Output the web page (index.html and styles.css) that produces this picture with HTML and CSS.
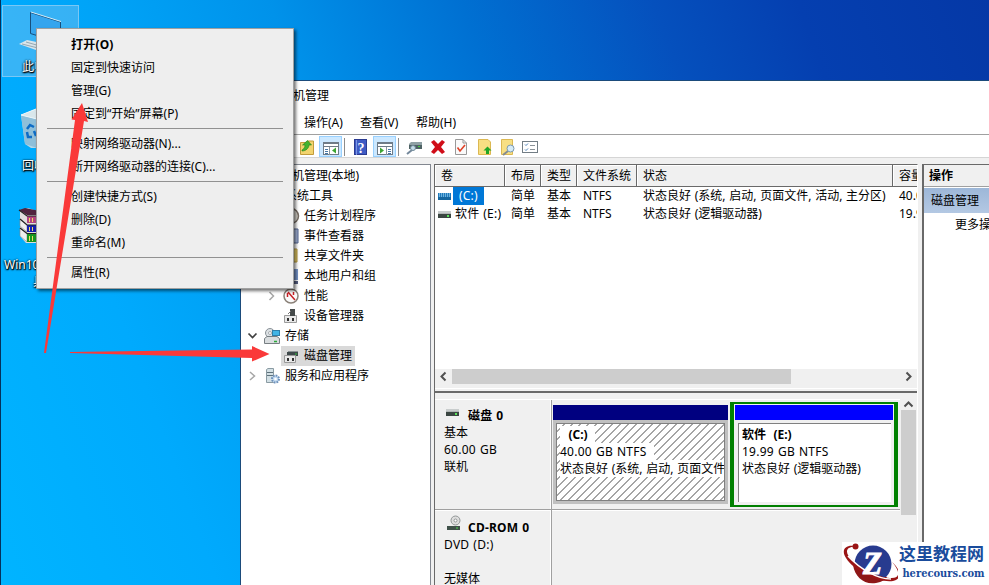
FILE: index.html
```html
<!DOCTYPE html>
<html lang="zh-CN">

<head>
    <title>计算机管理</title>
    <meta charset="UTF-8">
    <link rel="stylesheet" href="styles.css">
</head>

<body>
    <div class="desktop">
        <!-- 桌面图标 -->
        <div class="icon-selected"></div>
        <svg class="desk-icons" width="100" height="300" viewBox="0 0 100 300">
            <path d="M30.500 12.500L60.500 22V43L30.500 33.500Z" fill="#35a5ee" stroke="#174f7c"/>
            <path d="M31 12L61 21.500" stroke="#d5ecf8"/>
            <path d="M19 44L27 40L46 44V51L36 50Z" fill="#d9e5ea"/>
            <path d="M22 44L38 48M26 42L40 46" stroke="#94a8b3"/>
            <path d="M21 115L36 109L50 112L45 148H31L25 144Z" fill="#b9d7e5"/>
            <path d="M21 115L36 119L37 148L25 144Z" fill="#8fbfd9"/>
            <path d="M21 115L36 109L50 112L37 119Z" fill="#d9e7eb" stroke="#edf6fa"/>
            <path d="M27 129L30 125L34 127M27 132L28 137H32M34 131L36 136" fill="none" stroke="#0d6cc6" stroke-width="2.500"/>
            <path d="M20 211L28 208L40 212V243L26 243L20 236Z" fill="#e1dede"/>
            <path d="M19 210L25 208L40 211V215H27Z" fill="#50243f"/>
            <path d="M27 216H40V223H27Z" fill="#b34580"/>
            <path d="M20 219L27 225V232L20 226Z" fill="#eee" stroke="#888" stroke-width=".6"/>
            <path d="M27 225H40V232H27Z" fill="#151fb0"/>
            <path d="M20 228L27 234V242L20 236Z" fill="#eee" stroke="#888" stroke-width=".6"/>
            <path d="M27 234H40V242H27Z" fill="#189521"/>
            <path d="M19 210L27 216H40M20 219L27 225H40M20 228L27 233.500H40" fill="none" stroke="#222" stroke-width="1.200"/>
            <path d="M29.500 218V222M32.500 218V222M29.500 227V231M32.500 227V231M29.500 236V241M32.500 236V241" stroke="#f1dc62"/>
        </svg>
        <div class="desk-label label-pc">此电脑</div>
        <div class="desk-label label-bin">回收站</div>
        <div class="desk-label label-win">Win10激活</div>
        <div class="desk-label label-tool">具</div>

        <!-- 计算机管理窗口 -->
        <div class="window">
            <div class="titlebar">计算机管理</div>
            <div class="menubar"><span>文件(F)</span><span>操作(A)</span><span>查看(V)</span><span>帮助(H)</span></div>
            <div class="toolbar">
                <svg width="310" height="22" viewBox="240 136 310 22">
                    <path d="M300.500 142.500H306L307.500 141H313.500V154.500H300.500Z" fill="#f2d46e" stroke="#c29b3b"/>
                    <path d="M302 150C304 149 305 147 305 145H302.500L307.500 140.500L311.500 145H309C309 148 306 151 302 151Z" fill="#42b32e" stroke="#278018" stroke-width=".6"/>
                    <rect x="319.500" y="136.500" width="22" height="20" fill="#cce8ff" stroke="#99d1ff"/>
                    <g id="panes">
                        <rect x="323.500" y="142.500" width="15" height="12" fill="#fff" stroke="#6f7c88"/>
                        <path d="M323 143.500H339M323 146.500H339" stroke="#6f7c88"/>
                    </g>
                    <path d="M329.500 147V155" stroke="#8a949d"/>
                    <path d="M325 149.500H328M325 151.500H328M325 153.500H328" stroke="#4777a5"/>
                    <path d="M336 147.500V153.500L332 150.500Z" fill="#3da633"/>
                    <path d="M344.500 138V156M398.500 138V156" stroke="#8c8c8c"/>
                    <rect x="354.500" y="139.500" width="12" height="15" fill="#3e5bc4" stroke="#2b3b91"/>
                    <path d="M356.500 140V155" stroke="#7d96e4"/>
                    <text x="357.500" y="152.500" class="help-mark">?</text>
                    <rect x="373.500" y="136.500" width="22" height="20" fill="#cce8ff" stroke="#99d1ff"/>
                    <use href="#panes" x="54"/>
                    <path d="M386.500 147V155" stroke="#8a949d"/>
                    <path d="M388 149.500H391M388 151.500H391M388 153.500H391" stroke="#4777a5"/>
                    <path d="M380 147.500V153.500L384 150.500Z" fill="#3da633"/>
                    <path d="M409 144L411 142H422V148H409Z" fill="#8fa0a4"/>
                    <path d="M409 145H422V149H409Z" fill="#4e6264"/>
                    <path d="M418 146.500H420" stroke="#46d33f"/>
                    <path d="M407 154L412 150" stroke="#74889b" stroke-width="2"/>
                    <circle cx="413" cy="148" r="2.500" fill="#c5dce8" stroke="#6e8796"/>
                    <path d="M431 142L434 140L438 144L442 140L445 142L441 147L445 152L442 154L438 150L434 154L431 152L435 147Z" fill="#d00d18"/>
                    <path d="M455.500 139.500H463L466.500 143V154.500H455.500Z" fill="#fafafa" stroke="#999"/>
                    <path d="M463 139.500V143H466.500" fill="none" stroke="#999"/>
                    <path d="M457.500 147.500L460 151L465 145" fill="none" stroke="#df4228" stroke-width="1.600"/>
                    <path d="M478.500 139.500H488L490.500 142V154.500H478.500Z" fill="#f7df83" stroke="#dcb852"/>
                    <path d="M486 154V150.500H483.500L487.500 146.500L491.500 150.500H489V154Z" fill="#20a626"/>
                    <path d="M501.500 139.500H512.500V154.500H501.500Z" fill="#f7df83" stroke="#dcb852"/>
                    <path d="M503 155L508 151" stroke="#858c91" stroke-width="2"/>
                    <circle cx="510.500" cy="148.500" r="3.500" fill="#d5ebf7" stroke="#7c98ac"/>
                    <rect x="522.500" y="141.500" width="15" height="11" fill="#fff" stroke="#727d85"/>
                    <path d="M525 144.500L526 145.500L528 143.500M525 149.500L526 150.500L528 148.500" fill="none" stroke="#4a80b8"/>
                    <path d="M530 145.500H535M530 149.500H535" stroke="#8b9298"/>
                </svg>
            </div>

            <div class="content">
                <div class="tree">
                    <div class="node root">计算机管理(本地)</div>
                    <div class="node group">系统工具</div>
                    <div class="node leaf">任务计划程序</div>
                    <div class="node leaf">事件查看器</div>
                    <div class="node leaf">共享文件夹</div>
                    <div class="node leaf">本地用户和组</div>
                    <div class="node leaf">性能</div>
                    <div class="node leaf">设备管理器</div>
                    <div class="node group">存储</div>
                    <div class="node leaf selected"><span>磁盘管理</span></div>
                    <div class="node group">服务和应用程序</div>
                    <svg class="tree-icons" width="70" height="220" viewBox="240 166 70 220">
                        <circle cx="291" cy="216" r="7.500" fill="#d7d3cb" stroke="#756b62" stroke-width="1.500"/>
                        <path d="M286 229H298V243H286Z" fill="#a5b5d9" stroke="#52658f"/>
                        <path d="M284 249H297V262H284Z" fill="#ead26c" stroke="#b89b42"/>
                        <path d="M286 269H298V280H286Z" fill="#7694c9"/>
                        <path d="M291 281H298V284H291Z" fill="#555e80"/>
                        <path d="M269.500 292L273.500 296L269.500 300M250 372L254.500 376L250 380" fill="none" stroke="#a6a6a6" stroke-width="1.500"/>
                        <path d="M248.500 333.500L252.500 337.500L256.500 333.500" fill="none" stroke="#404040" stroke-width="1.700"/>
                        <circle cx="291" cy="296" r="7" fill="#fafafa" stroke="#8a8178" stroke-width="1.500"/>
                        <path d="M287.500 297V293M288 292L295 300M293.500 292V295" fill="none" stroke="#c62126" stroke-width="1.500"/>
                        <path d="M284.500 315.500H296.500V322.500H284.500Z" fill="#e9e9e9" stroke="#9b9b9b"/>
                        <path d="M287 318H289V321H287ZM292 318H294V321H292Z" fill="#333"/>
                        <path d="M290 309H295V316H290Z" fill="#454a4a"/>
                        <path d="M288 314L291 311" stroke="#777"/>
                        <circle cx="270" cy="333" r="4.500" fill="#dce1e4" stroke="#899197"/>
                        <circle cx="270" cy="333" r="1.500" fill="#fff" stroke="#899197" stroke-width=".7"/>
                        <rect x="272.500" y="330.500" width="7" height="5" fill="#40b4e6" stroke="#2d7eaa"/>
                        <path d="M264.500 338.500L267 336.500H277L279.500 338.500V343.500H264.500Z" fill="#d9dddf" stroke="#777e82"/>
                        <path d="M274 341.500H277" stroke="#2ba83a" stroke-width="1.500"/>
                    </svg>
                    <svg class="disk-node" width="22" height="20" viewBox="281 346 22 20">
                        <path d="M287 352H298V356H287Z" fill="#3f494b"/>
                        <path d="M288 351.500H298" stroke="#8b9495"/>
                        <path d="M284.500 355.500H295.500V362.500H284.500Z" fill="#e9e9e9" stroke="#999"/>
                        <path d="M287 358H289V361H287ZM292 358H294V361H292Z" fill="#333"/>
                        <path d="M295 354H297" stroke="#31c23a"/>
                    </svg>
                    <svg class="svc-node" width="18" height="18" viewBox="264 366 18 18">
                        <path d="M266.500 369.500L268 368.500H273.500V382.500H266.500Z" fill="#d3e0e5" stroke="#8a9ba3"/>
                        <path d="M267 372.500H273M267 375.500H273" stroke="#5f717b"/>
                        <circle cx="275.500" cy="379" r="3.500" fill="#c3daf0" stroke="#6e91bb" stroke-width="2" stroke-dasharray="1.700 1"/>
                        <circle cx="275.500" cy="379" r="1.300" fill="#fff"/>
                    </svg>
                </div>

                <div class="middle">
                    <div class="volumes">
                        <div class="vrow vhead"><span>卷</span><span>布局</span><span>类型</span><span>文件系统</span><span>状态</span><span>容量</span></div>
                        <div class="vrow">
                            <span class="vol"><i class="drive blue"></i><b class="picked">(C:)</b></span><span>简单</span><span>基本</span><span>NTFS</span><span>状态良好 (系统, 启动, 页面文件, 活动, 主分区)</span><span>40.00</span>
                        </div>
                        <div class="vrow">
                            <span class="vol"><i class="drive"></i><b>软件 (E:)</b></span><span>简单</span><span>基本</span><span>NTFS</span><span>状态良好 (逻辑驱动器)</span><span>19.99</span>
                        </div>
                        <div class="hscroll">
                            <svg width="17" height="15"><path d="M10.500 3.500L6.500 7.500L10.500 11.500" class="chev"/></svg>
                            <div class="hthumb"></div>
                            <svg width="17" height="15"><path d="M6.500 3.500L10.500 7.500L6.500 11.500" class="chev"/></svg>
                        </div>
                    </div>
                    <div class="splitter"></div>
                    <div class="graph">
                        <div class="disks">
                            <div class="disk">
                                <div class="disk-info">
                                    <h4><i class="drive"></i>磁盘 0</h4>
                                    <p>基本</p>
                                    <p class="wide">60.00 GB</p>
                                    <p>联机</p>
                                </div>
                                <div class="parts">
                                    <div class="part primary">
                                        <div class="bar"></div>
                                        <div class="part-body hatched">
                                            <p><b>&nbsp; (C:) &nbsp;</b></p>
                                            <p class="wide"><span>40.00 GB NTFS &nbsp;</span></p>
                                            <p><span>状态良好 (系统, 启动, 页面文件</span></p>
                                        </div>
                                    </div>
                                    <div class="part logical">
                                        <div class="bar"></div>
                                        <div class="part-body">
                                            <p><b>软件 &nbsp;(E:)</b></p>
                                            <p class="wide">19.99 GB NTFS</p>
                                            <p>状态良好 (逻辑驱动器)</p>
                                        </div>
                                    </div>
                                </div>
                            </div>
                            <div class="disk cdrom">
                                <div class="disk-info">
                                    <h4><svg class="cd" width="16" height="16"><circle cx="9.500" cy="5.500" r="4.500" fill="#dedede" stroke="#919696"/><circle cx="9.500" cy="5.500" r="1.500" fill="#fff" stroke="#919696"/><path d="M1 11H14V15H1Z" fill="#3f5149"/><path d="M10 13H12" stroke="#50d650"/></svg>CD-ROM 0</h4>
                                    <p class="wide">DVD (D:)</p>
                                    <p>&nbsp;</p>
                                    <p>无媒体</p>
                                </div>
                                <div class="parts"></div>
                            </div>
                        </div>
                        <div class="vscroll">
                            <svg width="15" height="11"><path d="M3.500 7.500L7.500 3.500L11.500 7.500" class="chev"/></svg>
                            <div class="vthumb"></div>
                        </div>
                    </div>
                </div>

                <div class="actions">
                    <h4>操作</h4>
                    <div class="action-title">磁盘管理</div>
                    <div class="action-item">更多操作</div>
                </div>
            </div>
        </div>

        <!-- 右键菜单 -->
        <div class="context-menu">
            <div class="item default">打开(O)</div>
            <div class="item">固定到快速访问</div>
            <div class="item">管理(G)</div>
            <div class="item">固定到“开始”屏幕(P)</div>
            <div class="sep"></div>
            <div class="item">映射网络驱动器(N)...</div>
            <div class="item">断开网络驱动器的连接(C)...</div>
            <div class="sep"></div>
            <div class="item">创建快捷方式(S)</div>
            <div class="item">删除(D)</div>
            <div class="item">重命名(M)</div>
            <div class="sep"></div>
            <div class="item">属性(R)</div>
        </div>

        <!-- 红色箭头 -->
        <svg class="arrows" width="280" height="370">
            <path d="M44 353L75 120L71.500 119.500L82 103L88 122L84 121L46 353Z"/>
            <path d="M70 352L252 349.500V346L269.500 354L252 361.500V358L70 353Z"/>
        </svg>

        <div class="watermark">
            <svg width="56" height="42" viewBox="842 543 56 42">
                <circle cx="873" cy="565" r="18.500" fill="#283b8f"/>
                <path d="M853 566C855 578 864 586 876 584C882 583 886 580 887 578C872 579 861 574 853 566Z" fill="#8e1717"/>
                <path d="M858 548C847 544 840 550 846 559C855 573 879 584 893 582C905 579 898 568 892 563C901 573 900 580 890 579C875 578 855 566 848 556C845 550 849 547 858 548Z" fill="#9a1515"/>
                <circle cx="855.500" cy="547.500" r="3" fill="#9a1515"/>
                <path d="M848 557C860 570 877 580 891 580" fill="none" stroke="#fff" stroke-width="1.500"/>
                <text x="863" y="575" class="mark-z">Z</text>
            </svg>
            <div class="mark-text">
                <strong>这里教程网</strong>
                <em>herecours.com</em>
            </div>
        </div>
    </div>
</body>

</html>
```
FILE: styles.css
```css
* {
    box-sizing: border-box;
}
body {
    margin: 0;
    font-family: "Noto Sans", "Noto Sans CJK SC", sans-serif;
    font-size: 12px;
    color: #000;
}
h4, p {
    margin: 0;
}
svg {
    display: block;
    flex: none;
}
.desktop {
    position: relative;
    width: 989px;
    height: 585px;
    overflow: hidden;
    word-spacing: 0.6px;
    border-left: 1px solid #04315c;
    background: linear-gradient(70deg, #00b4ff 0%, #00aafd 18%, #00a2f6 27%, #0092ea 40%, #0070d2 56%, #0550bd 72%, #053fb0 84%, #0538a6 100%);
}
.icon-selected {
    position: absolute;
    left: 1px;
    top: 5px;
    width: 77px;
    height: 72px;
    background: rgba(110, 190, 240, 0.5);
    border: 1px solid #79c7f5;
}
.desk-icons {
    position: absolute;
    left: -1px;
    top: 0;
}
.desk-label {
    position: absolute;
    color: #fff;
    line-height: 18px;
    white-space: nowrap;
    text-shadow: 0 1px 2px #000, 1px 1px 1px #000, 0 0 2px #000;
}
.label-pc {
    left: 21px;
    top: 58px;
}
.label-bin {
    left: 21px;
    top: 157px;
}
.label-win {
    left: 3px;
    top: 256px;
}
.label-tool {
    left: 32px;
    top: 273px;
}

/* 窗口 */
.window {
    position: absolute;
    left: 239px;
    top: 80px;
    width: 760px;
    height: 520px;
    display: flex;
    flex-direction: column;
    background: #fff;
    border: 1px solid #1b4b7b;
}
.titlebar {
    height: 28px;
    padding-left: 28px;
    line-height: 29px;
}
.menubar {
    display: flex;
    height: 26px;
    padding-left: 7px;
    line-height: 27px;
    border-bottom: 1px solid #a0a0a0;
}
.menubar span {
    width: 56px;
}
.toolbar {
    height: 23px;
    padding-top: 1px;
    border-bottom: 1px solid #d5d5d5;
}
.toolbar svg {
    margin-left: -1px;
}
.help-mark {
    font-family: "Liberation Serif", serif;
    font-size: 14px;
    font-weight: bold;
    fill: #fff;
}
.content {
    flex: 1;
    display: flex;
    padding-top: 6px;
    background: #f0f0f0;
}
.tree {
    position: relative;
    flex: none;
    width: 190px;
    padding-top: 1px;
    background: #fff;
    border: solid #828790;
    border-width: 1px 1px 0 0;
}
.node {
    height: 20px;
    line-height: 20px;
}
.root {
    padding-left: 27px;
}
.group {
    padding-left: 44px;
}
.leaf {
    padding-left: 63px;
}
.selected {
    display: flex;
    padding-left: 40px;
}
.selected span {
    padding: 0 3px 0 23px;
    background: #d9d9d9;
}
.tree-icons {
    position: absolute;
    left: -1px;
    top: 1px;
}
.disk-node {
    position: absolute;
    left: 40px;
    top: 181px;
}
.svc-node {
    position: absolute;
    left: 23px;
    top: 201px;
}

/* 卷列表 */
.middle {
    flex: none;
    width: 484px;
    margin-left: 3px;
    display: flex;
    flex-direction: column;
    border: solid #696969;
    border-width: 1px 0 0 1px;
    border-right: 1px solid #fff;
}
.volumes {
    height: 219px;
    display: flex;
    flex-direction: column;
    background: #fff;
}
.vrow {
    display: grid;
    grid-template-columns: 70px 36px 36px 60px 256px 24px;
    height: 18px;
    line-height: 18px;
    white-space: nowrap;
    overflow: hidden;
}
.vrow > span {
    padding-left: 6px;
    overflow: hidden;
}
.vhead {
    height: 22px;
    line-height: 22px;
    background: #f0f0f0;
    border-bottom: 1px solid #696969;
}
.vhead > span {
    border-right: 1px solid #696969;
    box-shadow: inset 1px 1px #fff;
}
.vhead > span:last-child {
    border-right: 0;
}
.vrow > .vol {
    display: flex;
    align-items: center;
    padding-left: 3px;
    letter-spacing: 0.2px;
}
.vol b {
    font-weight: normal;
    padding-left: 4px;
}
.vol .picked {
    margin-left: 2px;
    padding: 0 6px;
    background: #0078d7;
    color: #fff;
}
.drive {
    flex: none;
    display: block;
    width: 13px;
    height: 7px;
    background: radial-gradient(circle at 10px 5px, #5be35b 1px, transparent 1.5px), linear-gradient(#c9cdcd 0 2px, #9aa09f 3px, #3b4642 3px 7px);
}
.drive.blue {
    background: repeating-linear-gradient(90deg, #1f78bb 0 1px, #6db2dc 1px 2px);
    border-bottom: 3px solid #15669f;
}
.hscroll {
    display: flex;
    height: 15px;
    margin-top: auto;
    background: #f0f0f0;
    justify-content: space-between;
}
.hthumb {
    width: 339px;
    margin-right: auto;
    background: #cdcdcd;
}
.chev {
    fill: none;
    stroke: #505050;
    stroke-width: 2;
}
.splitter {
    height: 9px;
    border-bottom: 2px solid #696969;
    box-shadow: inset 0 4px #f0f0f0, inset 0 5px #fff;
}

/* 磁盘图形 */
.graph {
    flex: 1;
    display: flex;
    padding-top: 6px;
}
.disks {
    width: 465px;
    border-top: 1px solid #fff;
}
.disk {
    display: flex;
    height: 110px;
    border-bottom: 1px solid #a0a0a0;
    box-shadow: 0 1px #fff;
}
.disk-info {
    width: 117px;
    padding: 7px 0 0 9px;
    border-right: 1px solid #a0a0a0;
    box-shadow: inset -1px 0 #fff;
    line-height: 17px;
}
.disk-info h4 {
    display: flex;
    height: 17px;
    font-size: 12px;
    letter-spacing: 0.2px;
}
.disk-info .drive {
    margin: 2px 9px 0 2px;
}
.cdrom .disk-info {
    padding-top: 9px;
}
.cd {
    margin: -4px 6px 0 2px;
}
.wide {
    letter-spacing: 0.25px;
}
.parts {
    flex: 1;
    display: flex;
    gap: 2px;
    padding: 2px 2px 2px 1px;
    overflow: hidden;
}
.part {
    display: flex;
    flex-direction: column;
}
.primary {
    width: 175px;
    margin: 3px 0;
    background: #c0c0c0;
    padding: 0 3px 3px 3px;
}
.primary .bar {
    height: 15px;
    margin: 0 -3px 3px;
    background: #000080;
}
.part-body {
    flex: 1;
    padding: 2px 0 0 3px;
    line-height: 17px;
    background: #fff;
    border: 1px solid #808080;
    white-space: nowrap;
    overflow: hidden;
}
.hatched {
    background: repeating-linear-gradient(135deg, #fff 0 4.85px, #a5a5a5 4.85px 5.66px);
}
.hatched b {
    padding-left: 1px;
}
.hatched b, .hatched span {
    display: inline-block;
    vertical-align: top;
    background: #fff;
}
.logical {
    width: 168px;
    border: solid #008000;
    border-width: 2px 4px;
    background: #f0f0f0;
    padding: 1px;
}
.logical .bar {
    height: 15px;
    background: #0000ff;
}
.logical .part-body {
    margin: 3px 2px 2px 3px;
    border-right: 0;
    border-bottom: 0;
}
.vscroll {
    width: 15px;
    margin-left: 1px;
}
.vthumb {
    height: 105px;
    background: #cdcdcd;
}

/* 操作面板 */
.actions {
    flex: 1;
    min-width: 0;
    margin-left: 4px;
    background: #fff;
    border: solid #696969;
    border-width: 1px 0 0 2px;
}
.actions h4 {
    height: 22px;
    padding-left: 5px;
    font-size: 12px;
    line-height: 22px;
    background: #f0f0f0;
    border-bottom: 1px solid #a0a0a0;
}
.action-title {
    height: 25px;
    margin-top: 1px;
    padding-left: 7px;
    line-height: 25px;
    background: linear-gradient(#9db7d8, #b3c8e3);
}
.action-item {
    padding-left: 31px;
    line-height: 24px;
    white-space: nowrap;
}

/* 右键菜单 */
.context-menu {
    position: absolute;
    left: 35px;
    top: 28px;
    width: 258px;
    height: 261px;
    padding: 4px 9px;
    background: #eee;
    border: 1px solid #a0a0a0;
    box-shadow: 2px 2px 3px rgba(0, 0, 0, 0.55);
}
.item {
    height: 23px;
    padding-left: 25px;
    line-height: 23px;
}
.default {
    font-weight: bold;
    letter-spacing: 0.2px;
}
.sep {
    height: 1px;
    margin: 3px 1px;
    background: #919191;
}

.arrows {
    position: absolute;
    left: -1px;
    top: 0;
    fill: #fa3939;
}
.watermark {
    position: absolute;
    left: 841px;
    top: 542px;
    width: 148px;
    height: 43px;
    display: flex;
    background: #fff;
}
.mark-z {
    font: italic bold 31px "Liberation Serif", serif;
    fill: #fff;
    stroke: #fff;
}
.mark-text {
    display: flex;
    flex-direction: column;
    align-items: center;
    width: 87px;
}
.mark-text strong {
    font: bold 17px/26px "Liberation Serif", "Noto Sans CJK SC", serif;
    color: #1a4c9c;
    white-space: nowrap;
}
.mark-text em {
    padding-left: 4px;
    font: bold 11px/11px "DejaVu Serif Condensed", "Liberation Serif", serif;
    color: #1a4c9c;
}
```
